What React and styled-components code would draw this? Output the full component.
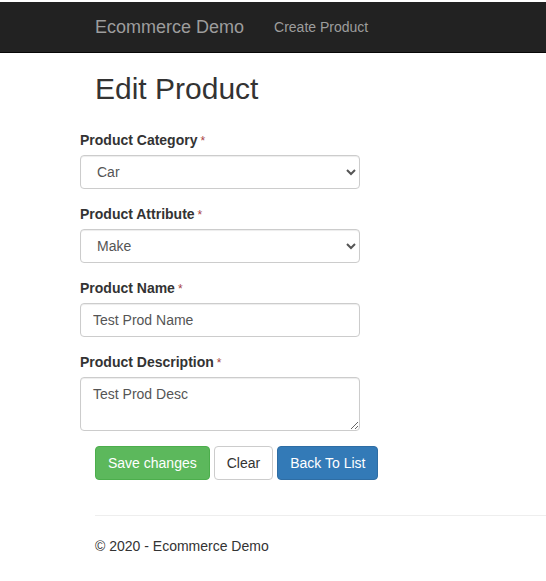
import React, { useState } from "react";
import styled, { createGlobalStyle } from "styled-components";

const GlobalStyles = createGlobalStyle`
  * {
    box-sizing: border-box;
  }
  body {
    margin: 0;
    padding-top: 2px;
    font-family: "Liberation Sans", Arial, sans-serif;
    font-size: 14px;
    line-height: 20px;
    color: #333;
    background: #fff;
  }
`;

const Navbar = styled.nav`
  height: 51px;
  background-color: #222;
  border-bottom: 1px solid #080808;
  display: flex;
  align-items: center;
  padding-left: 95px;
`;

const Brand = styled.a`
  font-size: 18px;
  line-height: 20px;
  color: #9d9d9d;
  text-decoration: none;
  padding-right: 15px;
`;

const NavLink = styled.a`
  font-size: 14px;
  line-height: 20px;
  color: #9d9d9d;
  text-decoration: none;
  padding: 0 15px;
`;

const Main = styled.main`
  padding-left: 95px;
`;

const Title = styled.h2`
  font-size: 30px;
  font-weight: 500;
  line-height: 33px;
  margin: 19px 0 25px;
`;

const Form = styled.form`
  margin-left: -15px;
`;

const Group = styled.div`
  display: flex;
  flex-direction: column;
  margin-bottom: 15px;
`;

const Label = styled.label`
  display: block;
  height: 20px;
  line-height: 20px;
  font-weight: bold;
  margin-bottom: 5px;

  > span {
    color: #a94442;
    font-weight: normal;
    font-size: 12px;
    line-height: 1;
    margin-left: 3px;
  }
`;

const controlStyles = `
  width: 280px;
  height: 34px;
  padding: 6px 12px;
  font-family: "Liberation Sans", Arial, sans-serif;
  font-size: 14px;
  line-height: 20px;
  color: #555;
  background-color: #fff;
  border: 1px solid #ccc;
  border-radius: 4px;
  box-shadow: inset 0 1px 1px rgba(0, 0, 0, 0.075);
  outline: none;
`;

const Select = styled.select`
  ${controlStyles}
`;

const Input = styled.input`
  ${controlStyles}
`;

const TextArea = styled.textarea`
  ${controlStyles}
  height: 54px;
  resize: vertical;
`;

const Actions = styled.div`
  display: flex;
  gap: 4px;
  padding-bottom: 15px;
`;

const Btn = styled.button`
  height: 34px;
  padding: 6px 12px;
  font-family: "Liberation Sans", Arial, sans-serif;
  font-size: 14px;
  line-height: 20px;
  border-radius: 4px;
  border: 1px solid ${(p) => p.$border};
  background-color: ${(p) => p.$bg};
  color: ${(p) => p.$color};
  cursor: pointer;
`;

const Rule = styled.hr`
  margin: 20px 0;
  border: 0;
  border-top: 1px solid #eee;
`;

const Footer = styled.footer`
  p {
    margin: 0;
  }
`;

function App() {
  const [name, setName] = useState("Test Prod Name");
  const [desc, setDesc] = useState("Test Prod Desc");

  return (
    <>
      <GlobalStyles />
      <Navbar>
        <Brand href="#">Ecommerce Demo</Brand>
        <NavLink href="#">Create Product</NavLink>
      </Navbar>
      <Main>
        <Title>Edit Product</Title>
        <Form onSubmit={(e) => e.preventDefault()}>
          <Group>
            <Label>
              Product Category<span>*</span>
            </Label>
            <Select defaultValue="Car">
              <option>Car</option>
              <option>Bike</option>
            </Select>
          </Group>
          <Group>
            <Label>
              Product Attribute<span>*</span>
            </Label>
            <Select defaultValue="Make">
              <option>Make</option>
              <option>Model</option>
            </Select>
          </Group>
          <Group>
            <Label>
              Product Name<span>*</span>
            </Label>
            <Input value={name} onChange={(e) => setName(e.target.value)} />
          </Group>
          <Group>
            <Label>
              Product Description<span>*</span>
            </Label>
            <TextArea value={desc} onChange={(e) => setDesc(e.target.value)} />
          </Group>
        </Form>
        <Actions>
          <Btn $bg="#5cb85c" $border="#4cae4c" $color="#fff">
            Save changes
          </Btn>
          <Btn $bg="#fff" $border="#ccc" $color="#333">
            Clear
          </Btn>
          <Btn $bg="#337ab7" $border="#2e6da4" $color="#fff">
            Back To List
          </Btn>
        </Actions>
        <Rule />
        <Footer>
          <p>&copy; 2020 - Ecommerce Demo</p>
        </Footer>
      </Main>
    </>
  );
}

export default App;
